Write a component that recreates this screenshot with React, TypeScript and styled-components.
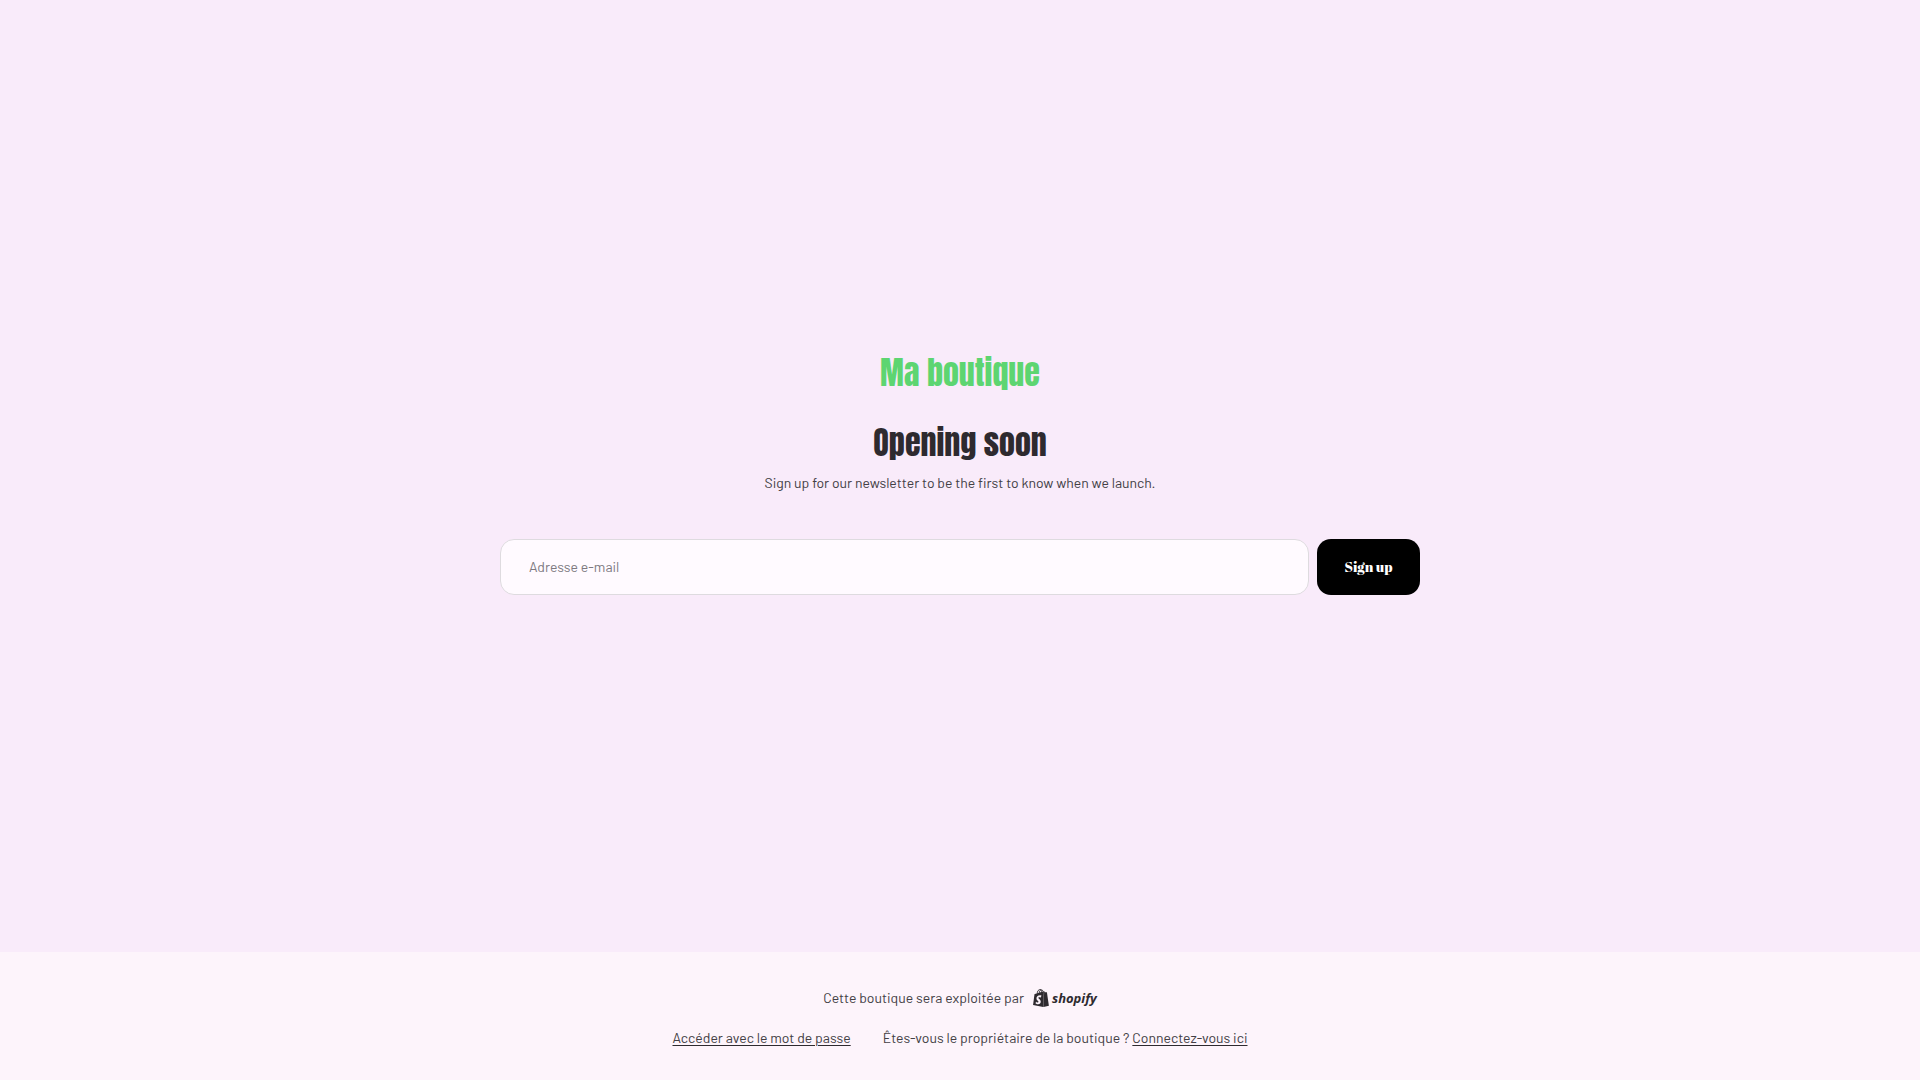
import React from "react";
import styled, { createGlobalStyle } from "styled-components";
import { SiShopify } from "react-icons/si";

const GlobalStyle = createGlobalStyle`
  *, *::before, *::after { box-sizing: border-box; }
  body {
    margin: 0;
    background: #ffffff;
    color: #434045;
    font-family: Barlow, Roboto, "Liberation Sans", sans-serif;
    font-size: 14px;
    line-height: 24px;
  }
`;

const Page = styled.div`
  display: flex;
  flex-direction: column;
  min-height: 100vh;
  background: #f9ebfa;
`;

const Main = styled.main`
  flex: 1;
  display: flex;
  flex-direction: column;
  align-items: center;
  justify-content: center;
  padding: 24px 24px 36px;
  text-align: center;
`;

const Title = styled.h1<{ $color: string }>`
  margin: 0 0 14px;
  color: ${(p) => p.$color};
  font-family: Anton, Impact, "Liberation Sans Narrow", "Liberation Sans", sans-serif;
  font-size: 32px;
  font-weight: 400;
  line-height: 56px;
`;

const Heading = styled(Title)`
  margin-bottom: 0;
`;

const Lead = styled.p`
  margin: 0;
`;

const Form = styled.form`
  display: flex;
  gap: 8px;
  width: 100%;
  max-width: 920px;
  margin-top: 44px;
`;

const EmailInput = styled.input`
  flex: 1;
  min-width: 0;
  height: 56px;
  padding: 0 28px 2px;
  border: 1px solid #dedbdf;
  border-radius: 14px;
  background: #fffaff;
  color: #2e2a2f;
  font: inherit;
  &::placeholder { color: #7d797f; opacity: 1; }
`;

const SubmitButton = styled.button`
  min-width: 103px;
  height: 56px;
  padding: 0 24px 2px;
  border: 0;
  border-radius: 14px;
  background: #000000;
  color: #ffffff;
  font-family: "Abril Fatface", "Liberation Serif", serif;
  font-size: 14px;
  font-weight: 400;
  cursor: pointer;
`;

const Footer = styled.footer`
  display: flex;
  flex-direction: column;
  gap: 16px;
  padding: 34px 24px 30px;
  background: #fdf4fb;
`;

const FooterRow = styled.div<{ $gap: number }>`
  display: flex;
  flex-wrap: wrap;
  align-items: center;
  justify-content: center;
  gap: ${(p) => p.$gap}px;
`;

const Link = styled.a`
  color: inherit;
  text-decoration: underline 1px #2e2a2f;
  text-underline-offset: 2px;
  &:hover { text-decoration-thickness: 2px; }
`;

const Brand = styled.a`
  display: inline-flex;
  align-items: center;
  gap: 2px;
  color: #2e2a2f;
  font-family: "Open Sans", sans-serif;
  font-size: 13px;
  font-style: italic;
  font-weight: 700;
  line-height: 24px;
  text-decoration: none;
`;

export default function App() {
  return (
    <>
      <GlobalStyle />
      <Page>
        <Main>
          <Title as="div" $color="#5dd571">Ma boutique</Title>
          <Heading $color="#2e2a2f">Opening soon</Heading>
          <Lead>Sign up for our newsletter to be the first to know when we launch.</Lead>
          <Form onSubmit={(e) => e.preventDefault()}>
            <EmailInput type="email" aria-label="Adresse e-mail" placeholder="Adresse e-mail" />
            <SubmitButton type="submit">Sign up</SubmitButton>
          </Form>
        </Main>
        <Footer>
          <FooterRow $gap={8}>
            <span>Cette boutique sera exploitée par</span>
            <Brand href="#shopify">
              <SiShopify size={18} aria-hidden="true" />
              shopify
            </Brand>
          </FooterRow>
          <FooterRow $gap={32}>
            <Link href="#password">Accéder avec le mot de passe</Link>
            <span>
              Êtes-vous le propriétaire de la boutique ? <Link href="#login">Connectez-vous ici</Link>
            </span>
          </FooterRow>
        </Footer>
      </Page>
    </>
  );
}
